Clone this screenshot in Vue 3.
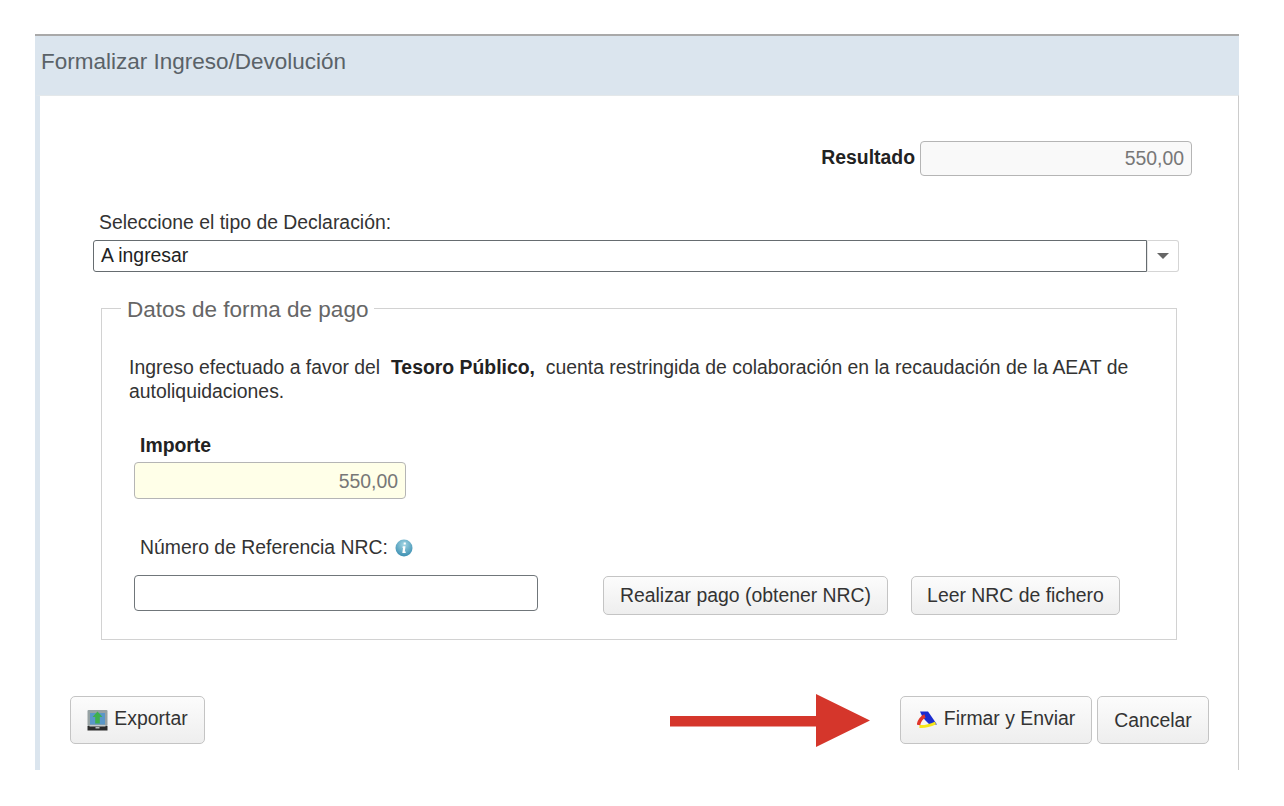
<template>
  <div class="page">
    <div class="panel">
      <div class="panel-head">Formalizar Ingreso/Devolución</div>
      <div class="panel-body">
        <div class="result-row">
          <label class="bold result-label">Resultado</label>
          <input class="field result-input" value="550,00" readonly />
        </div>

        <div class="type-block">
          <label class="type-label">Seleccione el tipo de Declaración:</label>
          <div class="combo">
            <div class="combo-value">A ingresar</div>
            <div class="combo-btn"><span class="caret"></span></div>
          </div>
        </div>

        <fieldset class="pay-box">
          <legend>Datos de forma de pago</legend>
          <p class="pay-text">
            Ingreso efectuado a favor del&nbsp; <b>Tesoro Público,</b>&nbsp; cuenta restringida de colaboración en la recaudación de la AEAT de autoliquidaciones.
          </p>
          <label class="bold amount-label">Importe</label>
          <input class="field amount-input" value="550,00" readonly />
          <div class="nrc-label">
            Número de Referencia NRC:
            <svg class="info-icon" viewBox="0 0 18 18" width="18" height="18">
              <defs>
                <radialGradient id="infoFill" cx="50%" cy="30%" r="70%">
                  <stop offset="0" stop-color="#a3d5e3" />
                  <stop offset="1" stop-color="#3b8fb2" />
                </radialGradient>
              </defs>
              <circle cx="9" cy="9" r="8.500" fill="url(#infoFill)" />
              <path d="M8.700 3.500h2.100v2.100H8.700zM7.800 7.200h2.700l-.7 5.300h.9v1.500H7.300l.8-5.300h-.7z" fill="#fff" />
            </svg>
          </div>
          <div class="nrc-row">
            <input class="nrc-input" />
            <button class="btn pay-btn">Realizar pago (obtener NRC)</button>
            <button class="btn file-btn">Leer NRC de fichero</button>
          </div>
        </fieldset>

        <div class="actions">
          <button class="btn big export-btn">
            <svg viewBox="0 0 21 21" width="21" height="21">
              <rect x="0.500" y="0" width="20" height="16" rx="1" fill="#97a2a3" />
              <rect x="3" y="3" width="15" height="11.500" fill="#5a97c8" />
              <path d="M10.500 1.500l5 5.500h-2.700v6.500H8.200V7H5.500z" fill="#3eb04c" />
              <rect x="0.500" y="16" width="20" height="4.500" fill="#2c2c2c" />
              <rect x="2.500" y="15" width="16" height="1.500" fill="#c5cbcc" />
              <rect x="8.500" y="17" width="4" height="1.500" fill="#b8bdbe" />
            </svg>
            <span class="btn-text">Exportar</span>
          </button>
          <div class="actions-right">
            <button class="btn big sign-btn">
              <svg viewBox="0 0 20 18" width="20" height="18">
                <path d="M3 .5h8l9 13-7 .5-5-5-3-4z" fill="#1a2bd0" />
                <path d="M2.500 15.500C8 16 12 15 18.500 12" fill="none" stroke="#f5e61a" stroke-width="3" />
                <path d="M1.500 14C2 10 5 6 8 5" fill="none" stroke="#e0352a" stroke-width="3.500" />
              </svg>
              <span class="btn-text">Firmar y Enviar</span>
            </button>
            <button class="btn big cancel-btn">Cancelar</button>
          </div>
        </div>

        <svg class="arrow" viewBox="0 0 200 53" width="200" height="53">
          <path d="M0 22h146V0l54 26.500L146 53V32.500H0z" fill="#d5362b" />
        </svg>
      </div>
    </div>
  </div>
</template>

<script setup>
</script>

<style>
html,
body {
  background: #fff;
}
</style>

<style scoped>
.page {
  width: 1284px;
  height: 806px;
  padding: 34px 45px 0 35px;
  box-sizing: border-box;
  font-family: "Liberation Sans", Arial, sans-serif;
  font-size: 19.4px;
  color: #333;
}

.panel {
  border-top: 2px solid #a9a9a9;
}

.panel-head {
  height: 59px;
  padding: 13px 0 0 6px;
  box-sizing: border-box;
  background: #dbe5ee;
  font-size: 22.5px;
  line-height: 25px;
  color: #5a6268;
}

.panel-body {
  position: relative;
  height: 675px;
  box-sizing: border-box;
  border-left: 5px solid #dbe5ee;
  border-right: 1px solid #ccc;
  border-top: 1px solid #e4e8ea;
  padding-top: 45px;
}

.bold {
  font-weight: bold;
  color: #222;
}

.field {
  box-sizing: border-box;
  border: 1px solid #b5b5b5;
  border-radius: 4px;
  padding: 0 7px;
  font: inherit;
  color: #777;
  text-align: right;
  outline: none;
}

.result-row {
  display: flex;
  justify-content: flex-end;
  align-items: flex-start;
  gap: 5px;
  padding-right: 46px;
}

.result-label {
  line-height: 32px;
}

.result-input {
  width: 272px;
  height: 35px;
  background: #f9f9f9;
}

.type-block {
  margin: 35px 0 0 53px;
  width: 1086px;
}

.type-label {
  display: block;
  padding-left: 6px;
  line-height: 22px;
}

.combo {
  display: flex;
  height: 32px;
  margin-top: 7px;
}

.combo-value {
  flex: 1;
  box-sizing: border-box;
  border: 1px solid #666c70;
  border-radius: 3px 0 0 3px;
  padding-left: 7px;
  line-height: 28px;
  color: #222;
}

.combo-btn {
  width: 32px;
  box-sizing: border-box;
  border: 1px solid #d5d5d5;
  border-left-color: #e6e6e6;
  border-radius: 0 3px 3px 0;
  display: flex;
  align-items: center;
  justify-content: center;
}

.caret {
  width: 0;
  height: 0;
  border-left: 6px solid transparent;
  border-right: 6px solid transparent;
  border-top: 6px solid #666;
}

.pay-box {
  margin: 22px 0 0 61px;
  width: 1076px;
  height: 346px;
  box-sizing: border-box;
  border: 1px solid #d2d2d2;
  padding: 0;
}

.pay-box legend {
  margin-left: 19px;
  padding: 4px 6px 0;
  font-size: 22.5px;
  line-height: 24px;
  color: #666;
}

.pay-text {
  margin: 33px 40px 0 27px;
  line-height: 24px;
  color: #333;
}

.pay-text b {
  color: #222;
}

.amount-label {
  display: block;
  margin: 30px 0 0 38px;
  line-height: 24px;
}

.amount-input {
  display: block;
  margin: 5px 0 0 32px;
  padding-top: 2px;
  width: 272px;
  height: 37px;
  background: #ffffe8;
}

.nrc-label {
  display: flex;
  align-items: center;
  gap: 7px;
  margin: 36px 0 0 38px;
  line-height: 24px;
}

.info-icon {
  margin-top: 1px;
}

.nrc-row {
  display: flex;
  align-items: flex-start;
  margin: 16px 0 0 32px;
}

.nrc-input {
  width: 404px;
  height: 36px;
  box-sizing: border-box;
  border: 1px solid #70767a;
  border-radius: 4px;
  outline: none;
}

.btn {
  box-sizing: border-box;
  border: 1px solid #c4c4c4;
  border-radius: 5px;
  background: linear-gradient(#fcfcfc, #eeeeee);
  font: inherit;
  color: #333;
  padding: 0;
}

.pay-btn {
  width: 285px;
  height: 39px;
  margin: 1px 0 0 65px;
}

.file-btn {
  width: 209px;
  height: 39px;
  margin: 1px 0 0 23px;
}

.actions {
  display: flex;
  justify-content: space-between;
  margin: 56px 29px 0 30px;
}

.actions-right {
  display: flex;
  gap: 5px;
}

.big {
  height: 48px;
  display: flex;
  align-items: center;
  justify-content: center;
  gap: 7px;
}

.btn-text {
  margin-bottom: 3px;
}

.export-btn {
  width: 135px;
  gap: 6px;
}

.sign-btn {
  width: 192px;
}

.cancel-btn {
  width: 112px;
}

.arrow {
  position: absolute;
  left: 630px;
  top: 598px;
}
</style>
